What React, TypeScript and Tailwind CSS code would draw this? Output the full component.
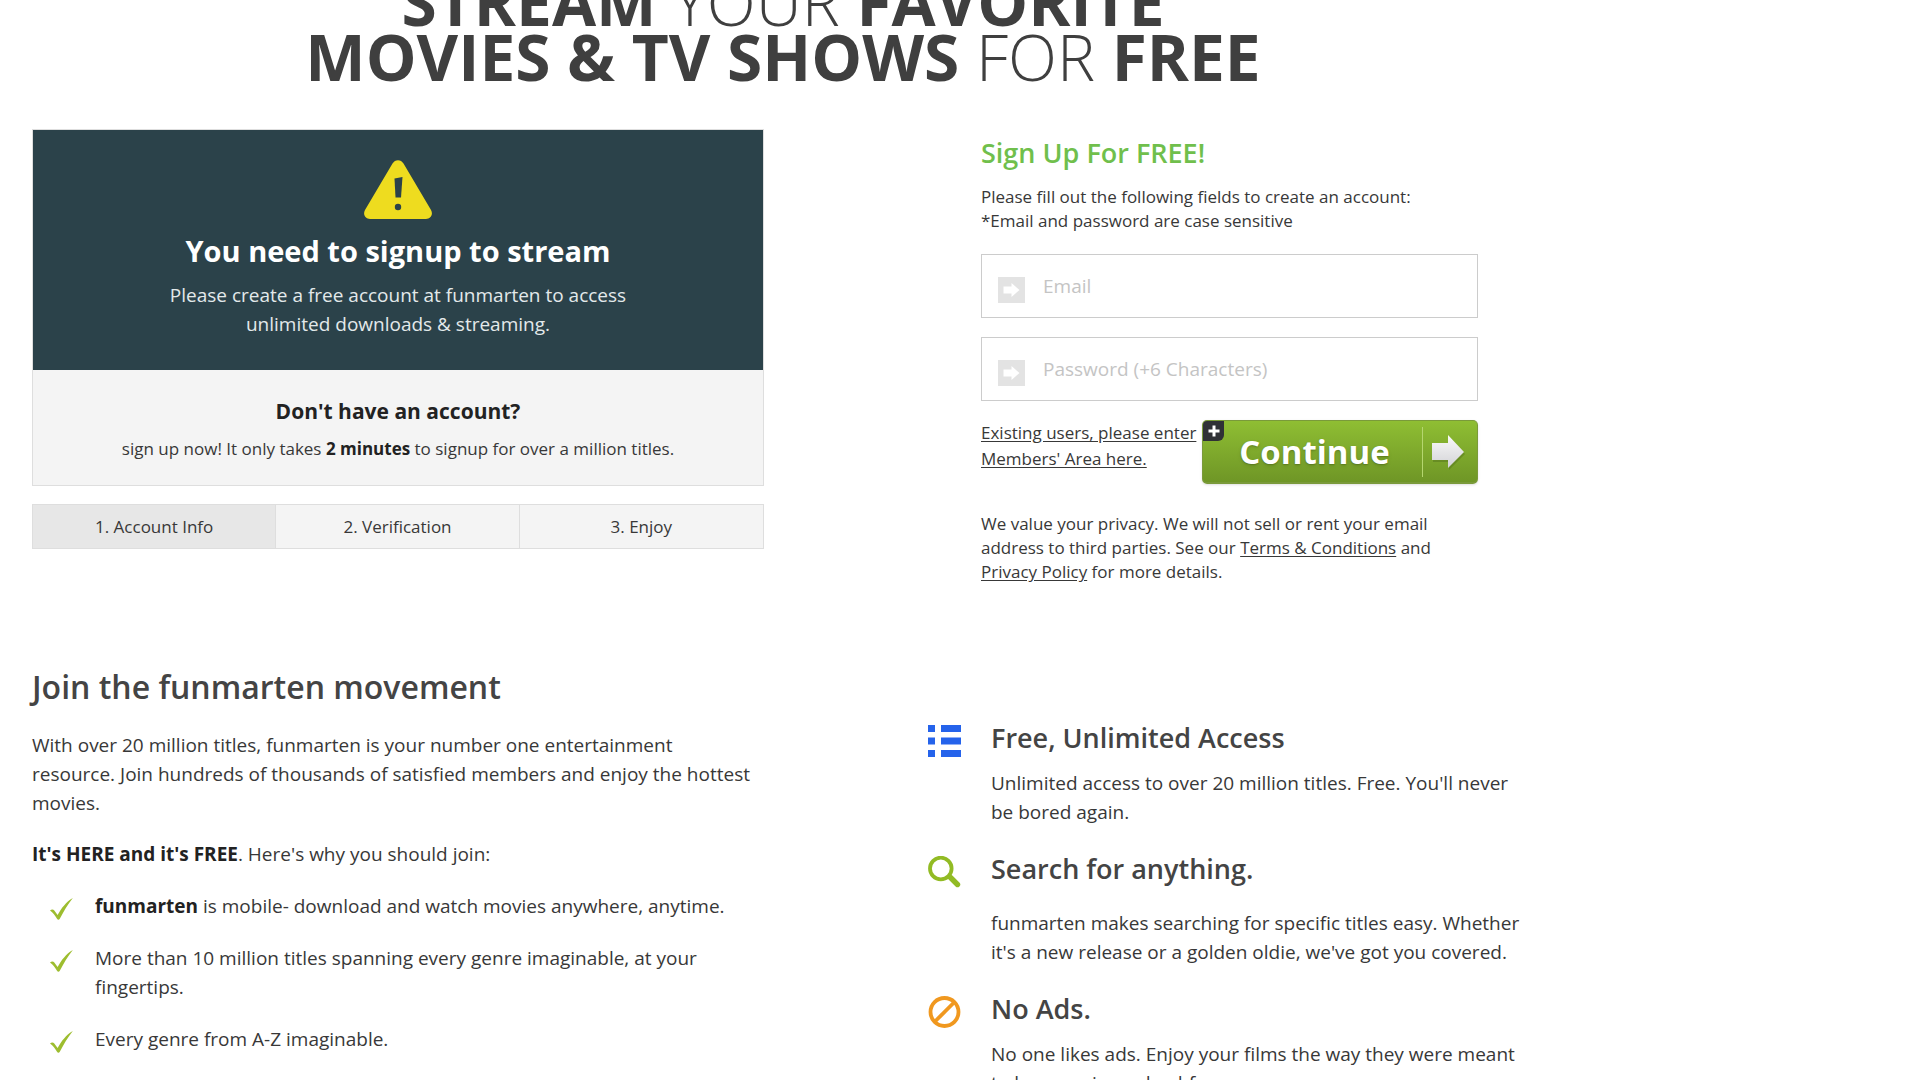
import { useState } from "react";
import type { ReactNode } from "react";

const steps = ["1. Account Info", "2. Verification", "3. Enjoy"];

const reasons: { id: number; text: ReactNode }[] = [
  {
    id: 1,
    text: (
      <>
        <strong className="font-bold text-[#222]">funmarten</strong> is mobile- download and watch
        movies anywhere, anytime.
      </>
    ),
  },
  {
    id: 2,
    text: "More than 10 million titles spanning every genre imaginable, at your fingertips.",
  },
  { id: 3, text: "Every genre from A-Z imaginable." },
];

function WarningIcon() {
  return (
    <svg width="68" height="59" viewBox="0 0 68 59" className="mx-auto" aria-hidden="true">
      <path
        d="M28.5 3.5C31 -1 37 -1 39.500 3.500L67 50C69.500 54.500 66.500 59 62 59H6C1.500 59 -1.500 54.500 1 50Z"
        fill="#eedc1f"
      />
      <path d="M30.500 18.500L38.500 17L37 37.500H31.500Z" fill="#2b424a" />
      <circle cx="34" cy="47" r="3.200" fill="#2b424a" />
    </svg>
  );
}

function CheckIcon() {
  return (
    <svg width="23" height="22" viewBox="0 0 23 22" className="mt-[6px] shrink-0" aria-hidden="true">
      <path
        d="M0 12.500C1.500 11 3.300 11 4.300 12.500L7.600 17C11.500 10 16 4 22.800 0C17.800 6.500 13.500 13.500 9.800 20.800C9 22.200 7.800 22.200 7 20.800C5.200 17.500 3 14.800 0 12.500Z"
        fill="#9dbd2f"
      />
    </svg>
  );
}

function ListIcon() {
  return (
    <svg width="33" height="32" viewBox="0 0 33 32" fill="#2563eb" aria-hidden="true">
      <rect x="0" y="0" width="7" height="7" />
      <rect x="13" y="0" width="20" height="7" />
      <rect x="0" y="12.500" width="7" height="7" />
      <rect x="13" y="12.500" width="20" height="7" />
      <rect x="0" y="25" width="7" height="7" />
      <rect x="13" y="25" width="20" height="7" />
    </svg>
  );
}

function SearchIcon() {
  return (
    <svg width="33" height="32" viewBox="0 0 33 32" fill="none" stroke="#92bb24" aria-hidden="true">
      <circle cx="12.800" cy="12.500" r="10.800" strokeWidth="3.800" />
      <path d="M20.500 20L22 21.500" strokeWidth="4" />
      <path d="M22.500 21.500L29.500 28.500" strokeWidth="5.400" strokeLinecap="round" />
    </svg>
  );
}

function NoAdsIcon() {
  return (
    <svg width="33" height="32" viewBox="0 0 33 32" fill="none" stroke="#f0981f" strokeWidth="3.800" aria-hidden="true">
      <circle cx="16.500" cy="16" r="14" />
      <path d="M6.500 26L26.500 6" />
    </svg>
  );
}

function FieldIcon() {
  return (
    <svg width="27" height="26" viewBox="0 0 27 26" className="mt-2 ml-4 shrink-0" aria-hidden="true">
      <rect width="27" height="26" fill="#e3e3e3" />
      <path d="M5.500 9.500H13.500V6L21.500 13L13.500 20V16.500H5.500Z" fill="#fff" />
    </svg>
  );
}

const features = [
  {
    title: "Free, Unlimited Access",
    text: "Unlimited access to over 20 million titles. Free. You'll never be bored again.",
    icon: <ListIcon />,
    spacing: "mt-[13px]",
  },
  {
    title: "Search for anything.",
    text: "funmarten makes searching for specific titles easy. Whether it's a new release or a golden oldie, we've got you covered.",
    icon: <SearchIcon />,
    spacing: "mt-[22px]",
  },
  {
    title: "No Ads.",
    text: "No one likes ads. Enjoy your films the way they were meant to be experienced: ad-free.",
    icon: <NoAdsIcon />,
    spacing: "mt-[13px]",
  },
];

type FieldProps = {
  id: string;
  type: string;
  placeholder: string;
  value: string;
  onChange: (value: string) => void;
};

function Field({ id, type, placeholder, value, onChange }: FieldProps) {
  return (
    <div className="flex h-16 items-center border border-[#ccc] bg-white">
      <label htmlFor={id} aria-label={placeholder}>
        <FieldIcon />
      </label>
      <input
        id={id}
        type={type}
        placeholder={placeholder}
        value={value}
        onChange={(e) => onChange(e.target.value)}
        className="h-full w-full min-w-0 bg-transparent pl-[18px] text-[19px] placeholder:text-[#c4c4c4] focus:outline-none"
      />
    </div>
  );
}

function SignUpForm() {
  const [email, setEmail] = useState("");
  const [password, setPassword] = useState("");

  return (
    <form className="mr-14 w-[497px] pt-[6px] text-[17px]" onSubmit={(e) => e.preventDefault()}>
      <h2 className="text-[27px] leading-9 font-semibold text-[#70bf4c]">Sign Up For FREE!</h2>
      <p className="mt-[14px] leading-6">
        Please fill out the following fields to create an account:
        <br />
        *Email and password are case sensitive
      </p>

      <div className="mt-[21px] flex flex-col gap-[19px]">
        <Field id="email" type="email" placeholder="Email" value={email} onChange={setEmail} />
        <Field
          id="password"
          type="password"
          placeholder="Password (+6 Characters)"
          value={password}
          onChange={setPassword}
        />
      </div>

      <div className="mt-[19px] flex items-start justify-between">
        <a href="#" className="leading-[26px] underline underline-offset-2">
          Existing users, please enter
          <br />
          Members' Area here.
        </a>
        <button
          type="submit"
          className="relative flex h-16 w-[276px] shrink-0 items-center overflow-hidden rounded-[5px] border border-b-2 border-[#7a9a3a] bg-linear-to-b from-[#8fbe33] to-[#6f9626] shadow-sm"
        >
          <span className="absolute top-0 left-0 flex h-5 w-[21px] items-center justify-center rounded-br-md bg-[#2f3136]">
            <svg width="12" height="12" viewBox="0 0 12 12" aria-hidden="true">
              <path d="M6 0.500V11.500M0.500 6H11.500" stroke="#fff" strokeWidth="3" />
            </svg>
          </span>
          <span className="flex-1 pl-1 text-center text-[33px] leading-[62px] font-bold text-white text-shadow-md">
            Continue
          </span>
          <span className="flex h-[50px] w-[55px] items-center justify-center border-l border-[#b5d66f] pr-1">
            <svg width="34" height="36" viewBox="0 0 34 36" aria-hidden="true">
              <defs>
                <linearGradient id="arrow" x1="0" y1="0" x2="0" y2="1">
                  <stop offset="0" stopColor="#fafafa" />
                  <stop offset="1" stopColor="#d2d2d6" />
                </linearGradient>
              </defs>
              <path d="M2 11H18V3L34 20L18 36V28H2Z" fill="#55761b" opacity="0.500" />
              <path d="M1 9H17V1L33 18L17 34V26H1Z" fill="url(#arrow)" />
            </svg>
          </span>
        </button>
      </div>

      <p className="mt-7 leading-6">
        We value your privacy. We will not sell or rent your email address to third parties. See our{" "}
        <a href="#" className="underline underline-offset-2">
          Terms &amp; Conditions
        </a>{" "}
        and{" "}
        <a href="#" className="underline underline-offset-2">
          Privacy Policy
        </a>{" "}
        for more details.
      </p>
    </form>
  );
}

export default function App() {
  return (
    <div className="overflow-hidden bg-white pl-8 font-['Open_Sans',sans-serif] text-[19px] leading-[29px] text-[#383838]">
      <main className="max-w-[1502px]">
        <h1 className="-mt-[26px] text-center text-[64px] leading-[55px] font-light text-[#3f3f3f] uppercase">
          <b className="font-bold">Stream</b> your <b className="font-bold">favorite</b>
          <br />
          <b className="font-bold">Movies &amp; TV shows</b> for <b className="font-bold">free</b>
        </h1>

        <section className="mt-[45px] flex items-start justify-between">
          <div className="w-[732px]">
            {/* Signup notice */}
            <div className="border border-[#dedede] text-center">
              <div className="bg-[#2b424a] pt-[30px] pb-[31px] text-[#e3e9ea]">
                <WarningIcon />
                <h2 className="mt-[14px] text-[29px] leading-9 font-bold text-white">
                  You need to signup to stream
                </h2>
                <p className="mt-3">
                  Please create a free account at funmarten to access
                  <br />
                  unlimited downloads &amp; streaming.
                </p>
              </div>
              <div className="bg-[#f4f4f4] pt-[27px] pb-6">
                <h3 className="text-[21px] font-bold text-[#222]">Don't have an account?</h3>
                <p className="mt-[11px] text-[17px] leading-6">
                  sign up now! It only takes <b className="font-bold text-[#222]">2 minutes</b> to
                  signup for over a million titles.
                </p>
              </div>
            </div>

            {/* Steps */}
            <ol className="mt-[18px] grid grid-cols-3 divide-x divide-[#dedede] border border-[#dedede] bg-[#f4f4f4] text-center text-[17px] leading-[43px]">
              {steps.map((step, i) => (
                <li key={step} className={i === 0 ? "bg-[#e7e7e7]" : ""}>
                  {step}
                </li>
              ))}
            </ol>
          </div>

          <SignUpForm />
        </section>

        <section className="mt-[81px] flex items-start justify-between">
          <div className="w-[732px]">
            <h2 className="text-[32px] leading-[44px] font-semibold text-[#444]">
              Join the funmarten movement
            </h2>
            <p className="mt-[22px] pr-2">
              With over 20 million titles, funmarten is your number one entertainment resource. Join
              hundreds of thousands of satisfied members and enjoy the hottest movies.
            </p>
            <p className="mt-[22px]">
              <b className="font-bold text-[#222]">It's HERE and it's FREE</b>. Here's why you should
              join:
            </p>
            <ul className="mt-[23px] flex flex-col gap-[23px] pl-[18px]">
              {reasons.map((reason) => (
                <li key={reason.id} className="flex items-start gap-[22px]">
                  <CheckIcon />
                  <span>{reason.text}</span>
                </li>
              ))}
            </ul>
          </div>

          <div className="flex w-[606px] flex-col gap-6 pt-[55px]">
            {features.map((feature) => (
              <div key={feature.title} className="flex items-start gap-[30px]">
                <div className="shrink-0 pt-[5px]">{feature.icon}</div>
                <div>
                  <h3 className="text-[27px] leading-9 font-semibold text-[#444]">{feature.title}</h3>
                  <p className={feature.spacing}>{feature.text}</p>
                </div>
              </div>
            ))}
          </div>
        </section>
      </main>
    </div>
  );
}
